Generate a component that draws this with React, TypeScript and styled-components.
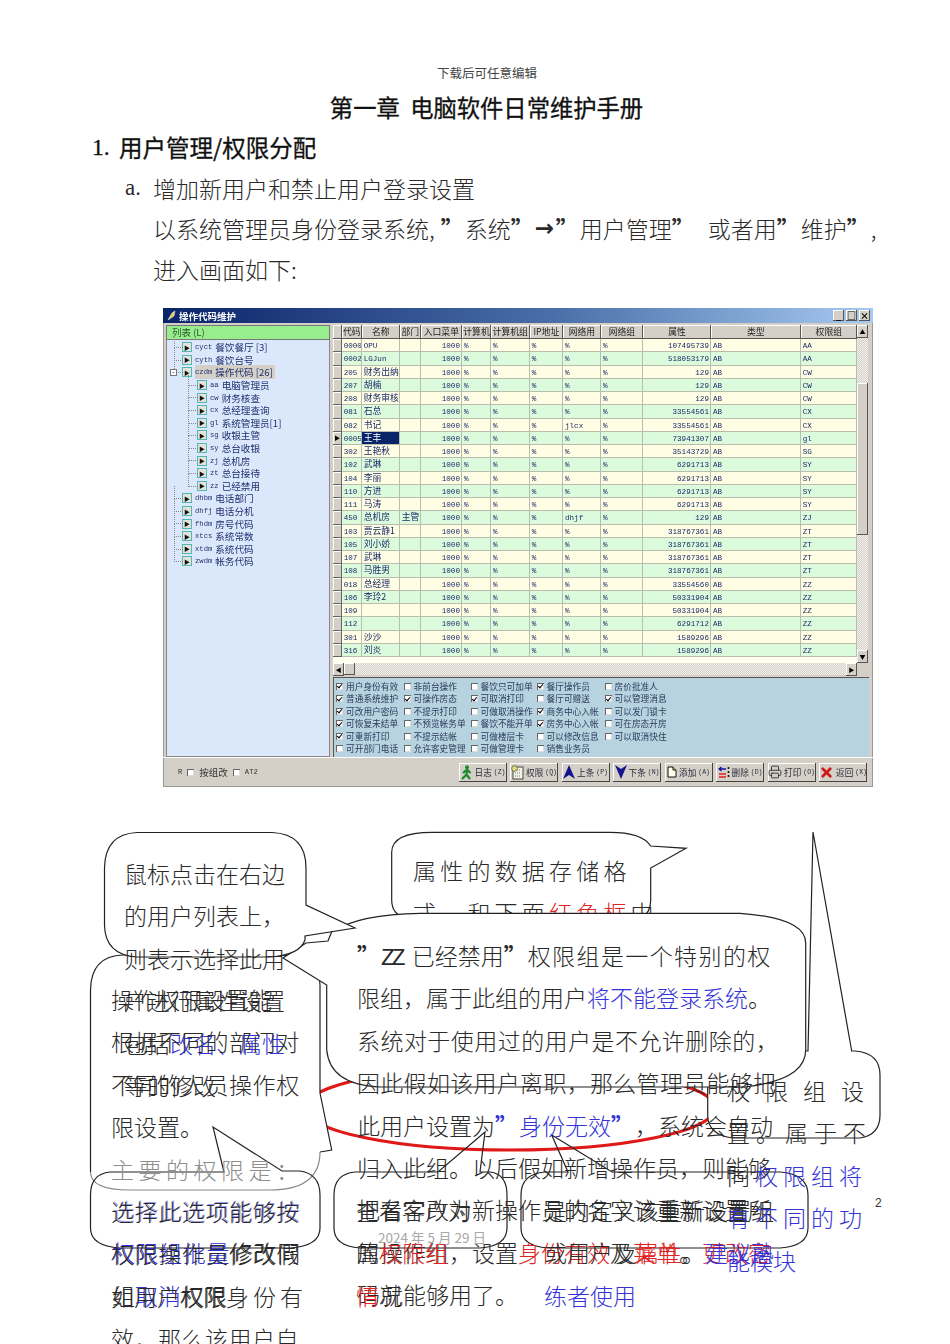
import React from 'react';
import styled, { createGlobalStyle } from 'styled-components';
import { Printer, X } from 'lucide-react';

const CJK = '"Noto Sans CJK SC", "Liberation Sans", sans-serif';
const SERIF = '"Liberation Serif", "Noto Sans CJK SC", serif';
const MONO = '"Liberation Mono", "Noto Sans CJK SC", monospace';

const GlobalStyle = createGlobalStyle`
  html, body {
    margin: 0;
    padding: 0;
    background: #fff;
    overflow: hidden;
  }
`;

const Page = styled.div`
  width: 950px;
  height: 1344px;
  padding-top: 65px;
  box-sizing: border-box;
  overflow: hidden;
  font-family: ${CJK};
  color: #222;
`;

const Header = styled.div`
  height: 18px;
  line-height: 18px;
  padding-left: 24px;
  font-family: ${SERIF};
  font-size: 12.5px;
  text-align: center;
  color: #444;
`;

const Title = styled.h1`
  margin: 4px 0 0;
  height: 40px;
  line-height: 40px;
  padding-left: 23px;
  font-size: 23.3px;
  font-weight: 400;
  -webkit-text-stroke: 0.3px #111;
  text-align: center;
  color: #111;
`;

const DocLine = styled.div<{ $left: number; $strong?: boolean }>`
  display: flex;
  height: 40.5px;
  line-height: 40.5px;
  padding-left: ${(p) => p.$left}px;
  font-size: ${(p) => (p.$strong ? 23.5 : 23)}px;
  font-weight: ${(p) => (p.$strong ? 400 : 300)};
  -webkit-text-stroke: ${(p) => (p.$strong ? '0.3px #111' : '0')};
  white-space: nowrap;
  color: ${(p) => (p.$strong ? '#111' : '#2a2a2a')};
`;

const Marker = styled.span<{ $width: number }>`
  width: ${(p) => p.$width}px;
  font-family: ${SERIF};
`;

const Quote = styled.span`
  display: inline-block;
  width: 24px;
  font-family: ${CJK};
  font-weight: 700;
`;

const Arrow = styled.span`
  display: inline-block;
  width: 21px;
  font-family: "DejaVu Sans", sans-serif;
  font-size: 23px;
  font-weight: 700;
`;

const Comma = styled.span<{ $after: number }>`
  margin-right: ${(p) => p.$after}px;
`;

/* --- the pasted program screenshot --- */

const Shot = styled.div`
  width: 710px;
  height: 479px;
  margin: 19px 0 0 163px;
  display: flex;
  flex-direction: column;
  background: #d4d0c8;
  box-shadow: inset 0 0 0 1px #999;
  font-family: ${CJK};
  font-size: 9px;
  color: #1b2a6b;
  filter: blur(0.3px);
  overflow: hidden;
`;

const TitleBar = styled.div`
  height: 15px;
  flex: none;
  display: flex;
  align-items: center;
  gap: 2px;
  padding: 0 3px;
  background: linear-gradient(90deg, #0a246a 0%, #4a6ea8 55%, #a6caf0 100%);
  color: #fff;
  font-size: 9.5px;
  font-weight: 700;
`;

const TitleText = styled.span`
  flex: 1;
`;

const WinBtn = styled.span`
  width: 11px;
  height: 11px;
  display: flex;
  align-items: center;
  justify-content: center;
  background: #d4d0c8;
  box-shadow: inset -1px -1px 0 #555, inset 1px 1px 0 #fff;
  color: #000;
  font-size: 9px;
  line-height: 9px;
  font-weight: 700;
`;

const Body = styled.div`
  flex: 1;
  display: flex;
  gap: 3px;
  padding: 2px 4px 0 3px;
  min-height: 0;
`;

const TreePanel = styled.div`
  width: 164px;
  flex: none;
  display: flex;
  flex-direction: column;
  background: #dbe8fb;
  box-shadow: inset 0 0 0 1px #888;
`;

const TreeTitle = styled.div`
  height: 15px;
  line-height: 15px;
  padding-left: 6px;
  background: #98ee8c;
  box-shadow: inset 0 0 0 1px #777;
  color: #2a5a2a;
  font-size: 9.5px;
`;

const TreeList = styled.div`
  padding-top: 1px;
  display: flex;
  flex-direction: column;
`;

const TreeRow = styled.div<{ $level: number }>`
  position: relative;
  height: 12.6px;
  display: flex;
  align-items: center;
  gap: 4px;
  padding-left: ${(p) => (p.$level ? 32 : 17)}px;
  font-size: 9.6px;
  color: #20306e;
  white-space: nowrap;

  &::before {
    content: '';
    position: absolute;
    left: ${(p) => (p.$level ? 22 : 8)}px;
    top: -6px;
    width: ${(p) => (p.$level ? 9 : 8)}px;
    height: 12px;
    border-left: 1px dotted #888;
    border-bottom: 1px dotted #888;
  }
`;

const Expander = styled.span`
  position: absolute;
  left: 4px;
  top: 3px;
  width: 7px;
  height: 7px;
  box-sizing: border-box;
  border: 1px solid #777;
  background: #fff;
  color: #333;
  font-size: 8px;
  line-height: 4px;
  text-align: center;
`;

const NodeIcon = styled.span`
  width: 8px;
  height: 8px;
  flex: none;
  display: flex;
  align-items: center;
  justify-content: center;
  background: #e4e2da;
  box-shadow: 0 0 0 1px #4fb8b0;
  color: #111;
  font-size: 6px;
`;

const NodeLabel = styled.span<{ $active?: boolean }>`
  display: flex;
  align-items: center;
  gap: 3px;
  padding-right: 2px;
  background: ${(p) => (p.$active ? '#d4d0c8' : 'transparent')};
`;

const Mono = styled.span<{ $size?: number }>`
  font-family: ${MONO};
  font-size: ${(p) => p.$size ?? 7.2}px;
`;

const Right = styled.div`
  flex: 1;
  min-width: 0;
  display: flex;
  flex-direction: column;
`;

const GridArea = styled.div`
  display: flex;
  height: 338px;
  flex: none;
`;

const Table = styled.div`
  width: 524px;
  flex: none;
  background: #fffff0;
`;

const COLUMNS = '8.7px 20px 38px 21px 41.3px 29px 38.7px 33.3px 38px 42px 68px 89.7px 56.3px';

const HeadRow = styled.div`
  display: grid;
  grid-template-columns: ${COLUMNS};
  height: 14px;
`;

const HeadCell = styled.div`
  background: #d4d0c8;
  box-shadow: inset -1px -1px 0 #555, inset 1px 1px 0 #fff;
  text-align: center;
  line-height: 13px;
  color: #222;
  font-size: 8.8px;
  white-space: nowrap;
  overflow: hidden;
`;

const DataRow = styled.div<{ $alt: boolean }>`
  display: grid;
  grid-template-columns: ${COLUMNS};
  height: 13.25px;
  background: ${(p) => (p.$alt ? '#dbfbdc' : '#fffee4')};
`;

const Cell = styled.div<{ $num?: boolean; $selected?: boolean }>`
  box-sizing: border-box;
  padding: 0 ${(p) => (p.$num ? 1 : 0)}px 0 2px;
  border-right: 1px solid #b9bdae;
  border-bottom: 1px solid #b9bdae;
  line-height: 12px;
  text-align: ${(p) => (p.$num ? 'right' : 'left')};
  white-space: nowrap;
  overflow: hidden;
  font-size: 8.8px;
  background: ${(p) => (p.$selected ? '#0a246a' : 'transparent')};
  color: ${(p) => (p.$selected ? '#fff' : '#1b2a6b')};
`;

const RowHead = styled.div`
  background: #d4d0c8;
  box-shadow: inset -1px -1px 0 #666, inset 1px 1px 0 #fff;
  font-size: 6px;
  line-height: 12px;
  color: #000;
  text-align: center;
`;

const SCROLL_TRACK = 'repeating-conic-gradient(#d4d0c8 0 25%, #f2f1ec 0 50%) 0 0 / 2px 2px';

const VScroll = styled.div`
  width: 11px;
  flex: none;
  display: flex;
  flex-direction: column;
  background: ${SCROLL_TRACK};
`;

const ScrollBtn = styled.div`
  flex: none;
  height: 13px;
  width: 11px;
  display: flex;
  align-items: center;
  justify-content: center;
  background: #d4d0c8;
  box-shadow: inset -1px -1px 0 #555, inset 1px 1px 0 #fff;
  font-size: 6px;
  color: #000;
`;

const VThumb = styled.div`
  height: 152px;
  margin: 45px 0 auto;
  background: #d4d0c8;
  box-shadow: inset -1px -1px 0 #555, inset 1px 1px 0 #fff;
`;

const HScroll = styled.div`
  height: 12px;
  width: 524px;
  flex: none;
  display: flex;
  background: ${SCROLL_TRACK};
`;

const HThumb = styled.div`
  width: 11px;
  margin-right: auto;
  background: #d4d0c8;
  box-shadow: inset -1px -1px 0 #555, inset 1px 1px 0 #fff;
`;

const Checks = styled.div`
  flex: 1;
  margin-top: 2px;
  padding: 3px 0 0 3px;
  display: grid;
  grid-auto-flow: column;
  grid-template-rows: repeat(6, 12.5px);
  grid-template-columns: 67.5px 67px 66px 68px 1fr;
  background: #b8d3e0;
  box-shadow: inset 0 1px 0 #555, inset 1px 0 0 #555;
  color: #2a3a5a;
  font-size: 8.7px;
`;

const CheckItem = styled.label`
  display: flex;
  align-items: center;
  gap: 3px;
  white-space: nowrap;
`;

const Box = styled.span<{ $on?: boolean }>`
  position: relative;
  width: 7px;
  height: 7px;
  flex: none;
  background: #fff;
  box-shadow: inset 1px 1px 0 #666, inset -1px -1px 0 #ddd;

  &::after {
    content: ${(p) => (p.$on ? "''" : 'none')};
    position: absolute;
    left: 2px;
    top: 0.5px;
    width: 2px;
    height: 4px;
    border: solid #000;
    border-width: 0 1.3px 1.3px 0;
    transform: rotate(40deg);
  }
`;

const Footer = styled.div`
  height: 30px;
  flex: none;
  display: flex;
  align-items: center;
  padding: 0 6px 0 15px;
  color: #333;
  box-shadow: inset 0 1px 0 #fff;
`;

const FooterLeft = styled.div`
  flex: 1;
  display: flex;
  align-items: center;
  gap: 5px;
  font-size: 9.5px;
`;

const Toolbar = styled.div`
  display: flex;
  gap: 3.5px;
`;

const ToolBtn = styled.div`
  width: 48px;
  height: 19px;
  display: flex;
  align-items: center;
  justify-content: center;
  gap: 2px;
  background: #d4d0c8;
  box-shadow: inset -1px -1px 0 #444, inset 1px 1px 0 #fff;
  color: #2a2a3a;
  font-size: 8.6px;
  white-space: nowrap;
`;

/* --- the overlapping callouts under the screenshot --- */

const Canvas = styled.div`
  position: relative;
  margin-top: 13px;
  width: 950px;
  height: 544px;
  font-family: ${CJK};
`;

const Shapes = styled.svg`
  position: absolute;
  left: 0;
  top: 0;
`;

const Note = styled.div<{ $x: number; $y: number }>`
  position: absolute;
  left: ${(p) => p.$x}px;
  top: ${(p) => p.$y - 802}px;
  font-size: 23px;
  font-weight: 300;
  line-height: 42.4px;
  white-space: nowrap;
  color: #2a2a2a;
`;

const NoteLine = styled.div<{ $gap?: number; $tone?: string }>`
  height: 42.4px;
  letter-spacing: ${(p) => p.$gap ?? 0}px;
  color: ${(p) => p.$tone ?? 'inherit'};
`;

const Spaced = styled.span<{ $gap: number }>`
  letter-spacing: ${(p) => p.$gap}px;
`;

const Blue = styled.span`
  color: #3434d6;
`;

const Red = styled.span`
  color: #e02424;
`;

const Latin = styled.span`
  font-family: ${MONO};
  font-size: 23px;
  letter-spacing: -3px;
  margin-right: 4px;
`;

const DateStamp = styled.div`
  position: absolute;
  left: 378px;
  top: 427px;
  font-size: 13.5px;
  color: #a8a8a8;
  white-space: nowrap;
`;

const PageNo = styled.div`
  position: absolute;
  left: 875px;
  top: 396px;
  font-family: "Liberation Sans", sans-serif;
  font-size: 12px;
  color: #333;
`;

const TREE = [
  { code: 'cyct', name: '餐饮餐厅 [3]', level: 0 },
  { code: 'cyth', name: '餐饮台号', level: 0 },
  { code: 'czdm', name: '操作代码 [26]', level: 0, active: true, open: true },
  { code: 'aa', name: '电脑管理员', level: 1 },
  { code: 'cw', name: '财务核查', level: 1 },
  { code: 'cx', name: '总经理查询', level: 1 },
  { code: 'gl', name: '系统管理员[1]', level: 1 },
  { code: 'sg', name: '收银主管', level: 1 },
  { code: 'sy', name: '总台收银', level: 1 },
  { code: 'zj', name: '总机房', level: 1 },
  { code: 'zt', name: '总台接待', level: 1 },
  { code: 'zz', name: '已经禁用', level: 1 },
  { code: 'dhbm', name: '电话部门', level: 0 },
  { code: 'dhfj', name: '电话分机', level: 0 },
  { code: 'fhdm', name: '房号代码', level: 0 },
  { code: 'xtcs', name: '系统常数', level: 0 },
  { code: 'xtdm', name: '系统代码', level: 0 },
  { code: 'zwdm', name: '帐务代码', level: 0 },
];

const HEADS = ['', '代码', '名称', '部门', '入口菜单', '计算机', '计算机组', 'IP地址', '网络用', '网络组', '属性', '类型', '权限组'];

type Row = [string, string, string, string, string, string];

const ROWS: Row[] = [
  ['0000', 'OPU', '', '%', '107495739', 'AA'],
  ['0002', 'LGJun', '', '%', '518053179', 'AA'],
  ['205', '财务出纳', '', '%', '129', 'CW'],
  ['207', '胡楠', '', '%', '129', 'CW'],
  ['208', '财务审核', '', '%', '129', 'CW'],
  ['081', '石总', '', '%', '33554561', 'CX'],
  ['082', '书记', '', 'jlcx', '33554561', 'CX'],
  ['0005', '王丰', '', '%', '73941307', 'gl'],
  ['302', '王艳秋', '', '%', '35143729', 'SG'],
  ['102', '武琳', '', '%', '6291713', 'SY'],
  ['104', '李丽', '', '%', '6291713', 'SY'],
  ['110', '方进', '', '%', '6291713', 'SY'],
  ['111', '马涛', '', '%', '6291713', 'SY'],
  ['450', '总机房', '主管', 'dhjf', '129', 'ZJ'],
  ['103', '贾云静1', '', '%', '318767361', 'ZT'],
  ['105', '刘小娇', '', '%', '318767361', 'ZT'],
  ['107', '武琳', '', '%', '318767361', 'ZT'],
  ['108', '马胜男', '', '%', '318767361', 'ZT'],
  ['018', '总经理', '', '%', '33554560', 'ZZ'],
  ['106', '李玲2', '', '%', '50331904', 'ZZ'],
  ['109', '', '', '%', '50331904', 'ZZ'],
  ['112', '', '', '%', '6291712', 'ZZ'],
  ['301', '沙沙', '', '%', '1589296', 'ZZ'],
  ['316', '刘炎', '', '%', '1589296', 'ZZ'],
];

const CHECKS: [string, boolean][] = [
  ['用户身份有效', true], ['普通系统维护', true], ['可改用户密码', true], ['可恢复未结单', true], ['可重新打印', true], ['可开部门电话', false],
  ['非前台操作', false], ['可操作房态', true], ['不提示打印', false], ['不预览帐务单', false], ['不提示结帐', false], ['允许客史管理', false],
  ['餐饮只可加单', false], ['可取消打印', true], ['可做取消操作', false], ['餐饮不能开单', false], ['可做楼层卡', false], ['可做管理卡', false],
  ['餐厅操作员', true], ['餐厅可赠送', false], ['商务中心入帐', true], ['房务中心入帐', true], ['可以修改信息', false], ['销售业务员', false],
  ['房价批准人', false], ['可以管理消息', true], ['可以发门锁卡', false], ['可在房态开房', false], ['可以取消快住', false],
];

const RunnerIcon = () => (
  <svg width="13" height="15" viewBox="0 0 13 15">
    <circle cx="7" cy="2.2" r="2" fill="#1c8a2c" />
    <path d="M7 4.5 L3 8 M7 4.5 L10.5 8 M7 4.5 L6.5 9.5 L2 14 M6.5 9.5 L10 14" stroke="#1c8a2c" strokeWidth="2.2" fill="none" />
  </svg>
);

const GrantIcon = () => (
  <svg width="13" height="15" viewBox="0 0 13 15">
    <rect x="2" y="2" width="10" height="12" fill="#f4f4e4" stroke="#444" />
    <path d="M4 5h6M4 8h6M4 11h6" stroke="#777" strokeDasharray="1 1" />
    <circle cx="3.5" cy="3.5" r="2.8" fill="#e8e070" stroke="#556" strokeWidth="0.8" />
  </svg>
);

const UpIcon = () => (
  <svg width="12" height="14" viewBox="0 0 12 14">
    <path d="M6 0 L12 14 L6 10 L0 14 Z" fill="#14148c" />
  </svg>
);

const DownIcon = () => (
  <svg width="12" height="14" viewBox="0 0 12 14">
    <path d="M0 0 L6 4 L12 0 L6 14 Z" fill="#14148c" />
  </svg>
);

const NewIcon = () => (
  <svg width="10" height="12" viewBox="0 0 10 12">
    <path d="M1 1 H6 L9 4 V11 H1 Z" fill="#fffff0" stroke="#111" />
    <path d="M6 1 V4 H9" fill="#e8e060" stroke="#111" />
  </svg>
);

const DeleteIcon = () => (
  <svg width="12" height="12" viewBox="0 0 12 12">
    <path d="M8 3 H1 M3.5 1 L1 3 L3.5 5" stroke="#1414a0" strokeWidth="1.3" fill="none" />
    <path d="M1 8 H8 M1 11 H8" stroke="#e02020" strokeWidth="1.3" />
    <path d="M10.5 1 V3 M10.5 5 V7 M10.5 9 V11" stroke="#111" strokeWidth="1.6" />
  </svg>
);

const BUTTONS = [
  { icon: <RunnerIcon />, label: '日志', key: 'Z' },
  { icon: <GrantIcon />, label: '权限', key: 'Q' },
  { icon: <UpIcon />, label: '上条', key: 'P' },
  { icon: <DownIcon />, label: '下条', key: 'N' },
  { icon: <NewIcon />, label: '添加', key: 'A' },
  { icon: <DeleteIcon />, label: '删除', key: 'D' },
  { icon: <Printer size={14} strokeWidth={1.4} color="#222" />, label: '打印', key: 'O' },
  { icon: <X size={15} strokeWidth={4.5} color="#d01818" />, label: '返回', key: 'X' },
];

const isLatin = (text: string) => /^[\x00-\x7f]*$/.test(text);

const ProgramShot = () => (
  <Shot>
    <TitleBar>
      <svg width="11" height="11" viewBox="0 0 11 11">
        <path d="M2 10 L6 3 L9 1 L8 6 Z" fill="#e8c860" stroke="#fff" strokeWidth="0.5" />
      </svg>
      <TitleText>操作代码维护</TitleText>
      <WinBtn>_</WinBtn>
      <WinBtn>□</WinBtn>
      <WinBtn>×</WinBtn>
    </TitleBar>
    <Body>
      <TreePanel>
        <TreeTitle>列表 (L)</TreeTitle>
        <TreeList>
          {TREE.map((node) => (
            <TreeRow key={node.code} $level={node.level}>
              {node.open && <Expander>-</Expander>}
              <NodeIcon>▶</NodeIcon>
              <NodeLabel $active={node.active}>
                <Mono>{node.code}</Mono>
                {node.name}
              </NodeLabel>
            </TreeRow>
          ))}
        </TreeList>
      </TreePanel>
      <Right>
        <GridArea>
          <Table>
            <HeadRow>
              {HEADS.map((h, i) => (
                <HeadCell key={i}>{h}</HeadCell>
              ))}
            </HeadRow>
            {ROWS.map((r, i) => (
              <DataRow key={r[0] + i} $alt={i % 2 === 1}>
                <RowHead>{r[0] === '0005' ? '▶' : ''}</RowHead>
                <Cell><Mono $size={7.6}>{r[0]}</Mono></Cell>
                <Cell $selected={r[0] === '0005'}>
                  {isLatin(r[1]) ? <Mono $size={7.6}>{r[1]}</Mono> : r[1]}
                </Cell>
                <Cell>{r[2]}</Cell>
                <Cell $num><Mono $size={7.6}>1000</Mono></Cell>
                <Cell><Mono $size={7.6}>%</Mono></Cell>
                <Cell><Mono $size={7.6}>%</Mono></Cell>
                <Cell><Mono $size={7.6}>%</Mono></Cell>
                <Cell><Mono $size={7.6}>{r[3]}</Mono></Cell>
                <Cell><Mono $size={7.6}>%</Mono></Cell>
                <Cell $num><Mono $size={7.6}>{r[4]}</Mono></Cell>
                <Cell><Mono $size={7.6}>AB</Mono></Cell>
                <Cell><Mono $size={7.6}>{r[5]}</Mono></Cell>
              </DataRow>
            ))}
          </Table>
          <VScroll>
            <ScrollBtn>▲</ScrollBtn>
            <VThumb />
            <ScrollBtn>▼</ScrollBtn>
          </VScroll>
        </GridArea>
        <HScroll>
          <ScrollBtn>◀</ScrollBtn>
          <HThumb />
          <ScrollBtn>▶</ScrollBtn>
        </HScroll>
        <Checks>
          {CHECKS.map(([label, on]) => (
            <CheckItem key={label}>
              <Box $on={on} />
              {label}
            </CheckItem>
          ))}
        </Checks>
      </Right>
    </Body>
    <Footer>
      <FooterLeft>
        <Mono>R</Mono>
        <Box />
        按组改
        <Box />
        <Mono>AT2</Mono>
      </FooterLeft>
      <Toolbar>
        {BUTTONS.map((b) => (
          <ToolBtn key={b.label}>
            {b.icon}
            {b.label}
            <Mono $size={6.5}>({b.key})</Mono>
          </ToolBtn>
        ))}
      </Toolbar>
    </Footer>
  </Shot>
);

const CalloutShapes = () => (
  <Shapes width="950" height="544" viewBox="0 800 950 544" stroke="#222" strokeWidth="1.2" fill="none">
    <path d="M391.7 852 Q392 832.3 432 832.3 H610 Q642 832.3 650.7 846 L686 848.3 L650.7 868 V900 Q650.7 912 642 918 H405 Q391.7 914 391.7 900 Z" />
    <ellipse cx="510" cy="1108" rx="205" ry="42" stroke="#e01818" strokeWidth="3" />
    <path fill="#fff" d="M733 1051 H808 L813 832 L851.7 1051 H855 Q880 1053 880 1075 V1115 Q880 1135 860 1138 H733 Q707.7 1135 707.7 1115 V1075 Q708 1053 733 1051 Z" />
    <path fill="#fff" stroke="none" d="M123 955 H280 Q320 958 320 985 V1093 L331.7 1150 L320 1152 Q320 1190 270 1190 H130 Q90.5 1190 90.5 1150 V990 Q91 956 123 955 Z" />
    <path d="M90.5 1172 V990 Q91 956 123 955 H280 Q320 958 320 985 V1093 L331.7 1150 L320 1152" />
    <path stroke="#888" d="M320 1152 Q320 1190 270 1190 H130 Q90.5 1190 90.5 1172" />
    <path fill="#fff" d="M331.7 931.7 Q360 914 420 913.3 H740 Q805.7 918 805.7 943 V1050 Q805.7 1080 745 1087 H380 Q330 1085 326.7 1050 V985 L283 958 L306 943 L328 941 Z" />
    <path fill="#fff" d="M137 832.5 H272 Q306 834 306 868 V905 L355 928 L305 936 V940 Q300 955 270 957 H137 Q105 955 104.5 925 V868 Q105 834 137 832.5 Z" />
    <path d="M110 1172 H224 L213 1127 L282 1171 H300 Q320 1174 320 1195 V1228 Q320 1246 290 1248 H120 Q90.5 1246 90.5 1228 V1195 Q90.5 1174 110 1172 Z" />
    <path d="M355 1172 H438 L485 1132 L480 1172 H490 Q507 1174 507 1195 V1228 Q507 1246 480 1248 H360 Q334 1246 334 1228 V1195 Q334 1174 355 1172 Z" />
    <path d="M545 1172 H568 L551.7 1135 L612 1172 H780 Q808 1174 808 1195 V1228 Q808 1246 780 1248 H548 Q521 1246 521 1228 V1195 Q521 1174 545 1172 Z" />
  </Shapes>
);

const Callouts = () => (
  <Canvas>
    <Note $x={413} $y={851}>
      <NoteLine $gap={4.2}>属性的数据存储格</NoteLine>
      <NoteLine $gap={4.2}>式，和下面<Red>红色框</Red>中</NoteLine>
    </Note>
    <CalloutShapes />
    <Note $x={124} $y={854}>
      <NoteLine>鼠标点击在右边</NoteLine>
      <NoteLine>的用户列表上，</NoteLine>
      <NoteLine>则表示选择此用</NoteLine>
      <NoteLine>户进行属性设置</NoteLine>
      <NoteLine>包括<Blue>改名、属性</Blue></NoteLine>
      <NoteLine>等的修改</NoteLine>
    </Note>
    <Note $x={112} $y={1191}>
      <NoteLine $gap={0.6} $tone="#9a9aee">选择此选项能够按</NoteLine>
      <NoteLine $gap={0.6}><Blue>权限组批量</Blue>修改同</NoteLine>
      <NoteLine>组<Blue>取消</Blue>权限</NoteLine>
    </Note>
    <Note $x={111} $y={980}>
      <NoteLine>操作权限设置能</NoteLine>
      <NoteLine $gap={0.6}>根据不同的部门对</NoteLine>
      <NoteLine $gap={0.6}>不同的人员操作权</NoteLine>
      <NoteLine>限设置。</NoteLine>
      <NoteLine $gap={4.5} $tone="#8e8e8e">主要的权限是：</NoteLine>
      <NoteLine $gap={0.6}>选择此选项能够按</NoteLine>
      <NoteLine $gap={0.6}>权限操作员修改假</NoteLine>
      <NoteLine>如用户权限<Spaced $gap={4}>身份</Spaced>有</NoteLine>
      <NoteLine $gap={0.5}>效，那么该用户自</NoteLine>
    </Note>
    <Note $x={357} $y={936}>
      <NoteLine><Quote>”</Quote><Latin>ZZ</Latin> 已经禁用<Quote>”</Quote><Spaced $gap={1.4}>权限组是一个特别的权</Spaced></NoteLine>
      <NoteLine>限组，属于此组的用户<Blue>将不能登录系统</Blue>。</NoteLine>
      <NoteLine $gap={0.45}>系统对于使用过的用户是不允许删除的，</NoteLine>
      <NoteLine $gap={0.3}>因此假如该用户离职，那么管理员能够把</NoteLine>
      <NoteLine>此用户设置为<Blue><Quote>”</Quote>身份无效<Quote>”</Quote></Blue>，系统会自动</NoteLine>
      <NoteLine>归入此组。以后假如新增操作员，则能够</NoteLine>
      <NoteLine>把名字改为新操作员的名字该重新设置所</NoteLine>
      <NoteLine>属操作组，设置<Red>身份有效</Red>及<Red>菜单</Red>。<Red>更改密</Red></NoteLine>
      <NoteLine>码就能够用了。</NoteLine>
    </Note>
    <Note $x={356} $y={1191}>
      <NoteLine>查看客户对</NoteLine>
      <NoteLine>的<Red>权限组</Red></NoteLine>
      <NoteLine><Red>情</Red>况</NoteLine>
    </Note>
    <Note $x={544} $y={1191}>
      <NoteLine>是内定义该重新设置组</NoteLine>
      <NoteLine>或用户及<Red>属性</Red>。<Blue>建议熟</Blue></NoteLine>
      <NoteLine><Blue>练者使用</Blue></NoteLine>
    </Note>
    <Note $x={727} $y={1071}>
      <NoteLine $gap={15}>权限组设</NoteLine>
      <NoteLine $gap={6}>置。属于不</NoteLine>
      <NoteLine $gap={5}>同<Blue>权限组将</Blue></NoteLine>
      <NoteLine $gap={5}><Blue>有不同的功</Blue></NoteLine>
      <NoteLine><Blue>能模块</Blue></NoteLine>
    </Note>
    <DateStamp>2024 年 5 月 29 日</DateStamp>
    <PageNo>2</PageNo>
  </Canvas>
);

export default function App() {
  return (
    <>
      <GlobalStyle />
      <Page lang="zh-CN">
        <Header>下载后可任意编辑</Header>
        <Title>第一章&nbsp;&nbsp;电脑软件日常维护手册</Title>
        <DocLine $left={92} $strong>
          <Marker $width={27}>1.</Marker>用户管理/权限分配
        </DocLine>
        <DocLine $left={125}>
          <Marker $width={28}>a.</Marker>增加新用户和禁止用户登录设置
        </DocLine>
        <DocLine $left={153}>
          以系统管理员身份登录系统<Comma $after={6}>,</Comma><Quote>”</Quote>系统<Quote>”</Quote><Arrow>→</Arrow><Quote>”</Quote>用户管理<Quote>”</Quote><Comma $after={12} />或者用<Quote>”</Quote>维护<Quote>”</Quote>,
        </DocLine>
        <DocLine $left={153}>进入画面如下:</DocLine>
        <ProgramShot />
        <Callouts />
      </Page>
    </>
  );
}
